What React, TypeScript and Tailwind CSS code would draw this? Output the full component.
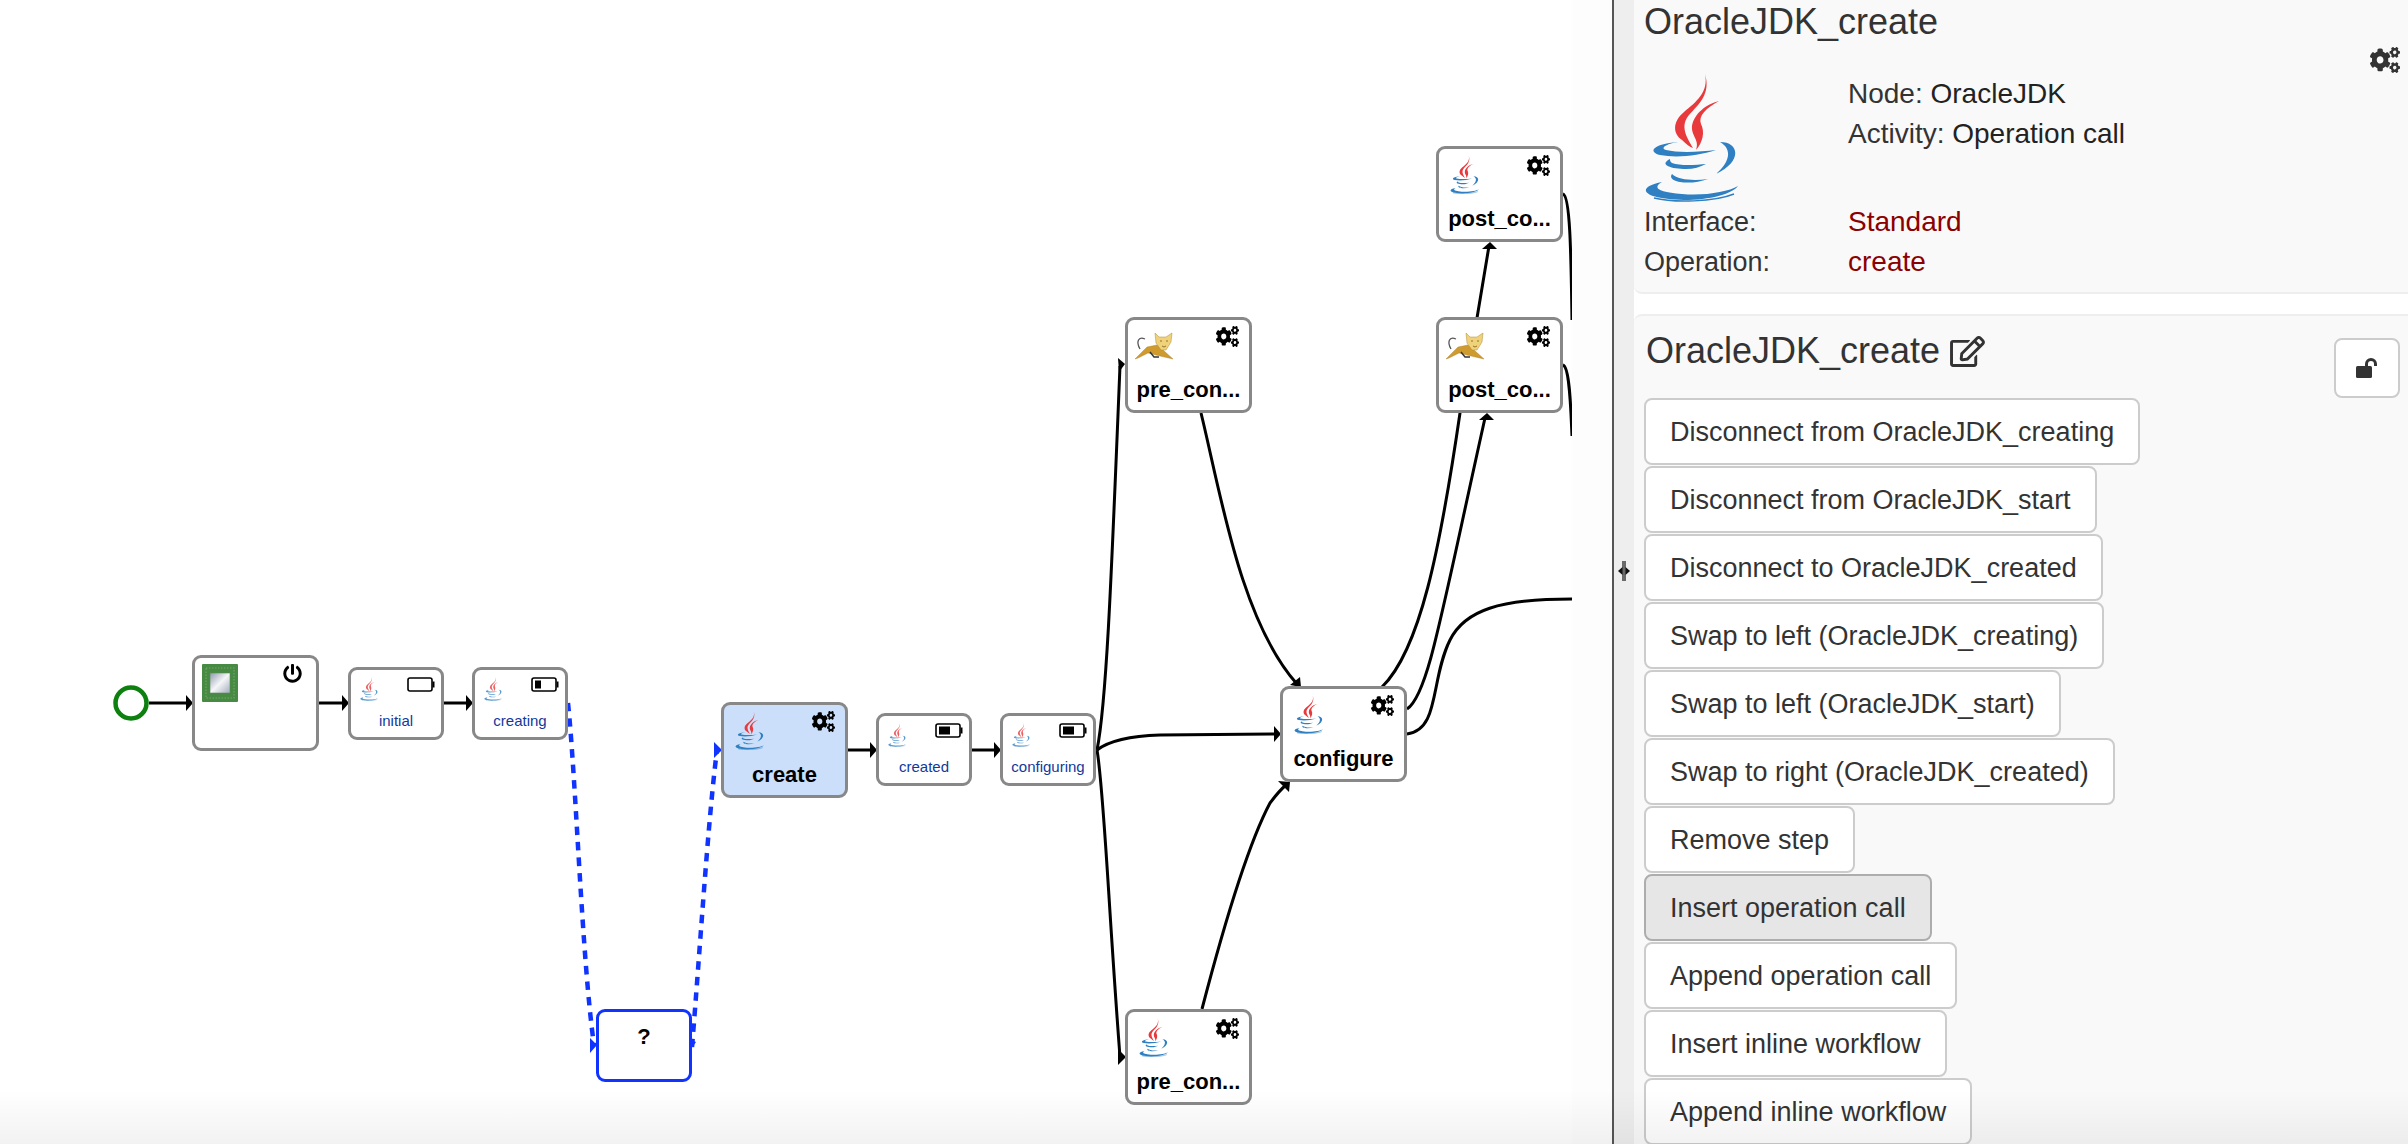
import React from "react";
import { FaCogs, FaPowerOff, FaRegEdit } from "react-icons/fa";

function JavaLogo({ className }: { className: string }) {
  return (
    <svg viewBox="0 0 94 128" className={className} fill="none" preserveAspectRatio="none">
      <path d="M61 0C65 18 52 28 40 38C28 48 29 60 38 66C42 70 46 73 49 74C42 62 36 52 45 41C55 30 67 20 61 0Z" fill="#e8393c" />
      <path d="M75 27C62 30 50 40 48 52C47 62 56 66 52 76C59 68 61 58 57 50C54 42 62 34 75 27Z" fill="#e8393c" />
      <g fill="#2f80c2">
        <path d="M34 68C8 70 4 78 16 81C32 84 54 82 72 76C56 78 34 79 22 76C16 74 22 70 34 68Z" />
        <path d="M76 68C96 68 98 88 72 100C84 90 90 76 76 68Z" />
        <path d="M26 85C14 91 28 95 42 95C50 95 56 93 62 90C52 91 36 92 28 89C26 88 26 86 26 85Z" />
        <path d="M28 100C22 108 46 112 64 105C50 107 34 106 28 100Z" />
        <path d="M18 108C-8 113 -4 125 40 126C66 126 88 120 94 112C84 118 60 122 38 120C14 118 8 114 18 108Z" />
      </g>
      <path d="M10 124C30 129 70 128 90 120" stroke="#2f80c2" strokeWidth="1.5" />
    </svg>
  );
}

function Tomcat() {
  return (
    <svg viewBox="0 0 39 28" className="w-[39px] h-[28px]" fill="none">
      <path d="M10 7C3 4 1 10 5 17" stroke="#555" strokeWidth="1.3" />
      <path d="M0 27L12 15L22 13L28 18L38 27L25 24L13 21L3 26Z" fill="#cf9a2e" stroke="#a87a1e" strokeWidth=".4" />
      <path d="M15 20L19 25L24 25" stroke="#333" strokeWidth="1.4" />
      <path d="M20 1L24 5H31L37 1L36 10L31 18L26 18L21 11Z" fill="#efd27a" stroke="#b08a35" strokeWidth=".5" />
      <path d="M25 9H27M31 9H33M27 14L29 15L31 14" stroke="#8a6a20" strokeWidth=".9" />
    </svg>
  );
}

function Chip() {
  return (
    <svg viewBox="0 0 36 38" className="w-[36px] h-[38px]">
      <defs>
        <linearGradient id="chipface" x1="0" y1="0" x2="1" y2="1">
          <stop offset="0" stopColor="#8f99ad" />
          <stop offset=".5" stopColor="#f5f6f8" />
          <stop offset="1" stopColor="#a3acbc" />
        </linearGradient>
      </defs>
      <rect width="36" height="38" rx="1" fill="#468a44" />
      <rect x="4" y="4" width="28" height="30" fill="none" stroke="#6ea662" strokeWidth="1.2" strokeDasharray="1.5 1.5" />
      <rect x="8" y="9" width="20" height="20" fill="url(#chipface)" stroke="#5c8a58" strokeWidth=".6" />
    </svg>
  );
}

function Battery({ level }: { level: number }) {
  return (
    <svg viewBox="0 0 28 15" className="w-[28px] h-[15px]">
      <rect x="1" y="1" width="24" height="13" rx="2" fill="#fff" stroke="#000" strokeWidth="1.6" />
      <rect x="25.5" y="4.5" width="2" height="6" fill="#000" />
      {level > 0 && <rect x="4" y="3.5" width={level} height="8" fill="#000" />}
    </svg>
  );
}

function Gears({ className }: { className: string }) {
  return <FaCogs className={className} preserveAspectRatio="none" />;
}

type NodeProps = {
  x: number;
  y: number;
  label: string;
  icon: "java" | "tomcat";
  selected?: boolean;
};

function BigNode({ x, y, label, icon, selected }: NodeProps) {
  return (
    <div
      className={`absolute w-[127px] h-[96px] rounded-[9px] border-[3px] border-[#888] flex flex-col ${selected ? "bg-[#cbdffb]" : "bg-white"}`}
      style={{ left: x, top: y }}
    >
      <div className="flex justify-between items-start h-[54px] pl-[11px] pr-[10px] pt-[7px]">
        {icon === "java" ? <JavaLogo className="w-[29px] h-[38px]" /> : <div className="-ml-[4px] mt-[5px]"><Tomcat /></div>}
        <Gears className="w-[23px] h-[21px] -mt-px text-black" />
      </div>
      <div className="text-center text-[22px] leading-[32px] font-bold text-black">{label}</div>
    </div>
  );
}

function SmallNode({ x, label, y, level }: { x: number; y: number; label: string; level: number }) {
  return (
    <div
      className="absolute w-[96px] h-[73px] rounded-[9px] border-[3px] border-[#888] bg-white flex flex-col"
      style={{ left: x, top: y }}
    >
      <div className="flex justify-between items-start h-[39px] pl-[9px] pr-[6px] pt-[7px]">
        <JavaLogo className="w-[18px] h-[24px] opacity-80" />
        <Battery level={level} />
      </div>
      <div className="text-center text-[15px] leading-[24px] text-[#12399c]">{label}</div>
    </div>
  );
}

const ACTIONS: { label: string; active?: boolean }[] = [
  { label: "Disconnect from OracleJDK_creating" },
  { label: "Disconnect from OracleJDK_start" },
  { label: "Disconnect to OracleJDK_created" },
  { label: "Swap to left (OracleJDK_creating)" },
  { label: "Swap to left (OracleJDK_start)" },
  { label: "Swap to right (OracleJDK_created)" },
  { label: "Remove step" },
  { label: "Insert operation call", active: true },
  { label: "Append operation call" },
  { label: "Insert inline workflow" },
  { label: "Append inline workflow" },
];

function Diagram() {
  return (
    <div className="relative w-[1572px] h-full shrink-0 overflow-hidden bg-white">
      <svg className="absolute left-0 top-0 w-[1572px] h-[1144px]" viewBox="0 0 1572 1144" fill="none">
        <g stroke="#000" strokeWidth="3">
          <path d="M149 703H188M318 703H344M443 703H468M847 750H872M971 750H996" />
          <path d="M1097 750C1107 700 1112 560 1120 366" />
          <path d="M1097 750C1104 790 1108 900 1120 1057" />
          <path d="M1097 750C1110 740 1130 736 1160 735L1276 734" />
          <path d="M1201 413C1220 490 1240 620 1297 684" />
          <path d="M1202 1009C1220 940 1245 850 1270 803C1276 795 1280 790 1286 785" />
          <path d="M1382 687C1420 650 1440 550 1460 413L1477 318L1489 246" />
          <path d="M1407 709C1428 695 1440 620 1485 418" />
          <path d="M1407 734C1440 730 1430 680 1450 640C1465 610 1500 599 1572 599" />
          <path d="M1563 194C1570 196 1571 250 1572 320" />
          <path d="M1563 365C1570 367 1571 415 1572 436" />
        </g>
        <g fill="#000">
          <polygon points="186,695 193,703 186,711" />
          <polygon points="342,695 349,703 342,711" />
          <polygon points="466,695 473,703 466,711" />
          <polygon points="870,742 877,750 870,758" />
          <polygon points="994,742 1001,750 994,758" />
          <polygon points="1274,726 1281,734 1274,742" />
          <polygon points="1118,1049 1126,1057 1118,1065" />
          <polygon points="1118,358 1125,364 1119,372" />
          <polygon points="1490,242 1497,249 1482,249" />
          <polygon points="1487,413 1494,420 1479,420" />
          <polygon points="1300,677 1301,687 1290,685" />
          <polygon points="1290,782 1289,792 1278,781" />
        </g>
        <g stroke="#1133ff" strokeWidth="4.5" strokeDasharray="8.5 7">
          <path d="M568 703C576 780 582 960 594 1045" />
          <path d="M692 1047C700 950 708 820 717 750" />
        </g>
        <g fill="#1133ff">
          <polygon points="590,1038 597,1045 590,1053" />
          <polygon points="714,742 722,750 714,758" />
          <polygon points="691,1040 696,1042 691,1049" />
        </g>
        <circle cx="131" cy="703" r="15.5" stroke="#0d8010" strokeWidth="4.5" fill="#fff" />
      </svg>

      <div className="absolute left-[192px] top-[655px] w-[127px] h-[96px] rounded-[9px] border-[3px] border-[#888] bg-white flex justify-between items-start pl-[7px] pr-[14px] pt-[6px]">
        <Chip />
        <FaPowerOff className="w-[19px] h-[19px] text-black" />
      </div>
      <SmallNode x={348} y={667} label="initial" level={0} />
      <SmallNode x={472} y={667} label="creating" level={6} />
      <BigNode x={721} y={702} label="create" icon="java" selected />
      <SmallNode x={876} y={713} label="created" level={11} />
      <SmallNode x={1000} y={713} label="configuring" level={11} />
      <BigNode x={1125} y={317} label="pre_con..." icon="tomcat" />
      <BigNode x={1125} y={1009} label="pre_con..." icon="java" />
      <BigNode x={1280} y={686} label="configure" icon="java" />
      <BigNode x={1436} y={146} label="post_co..." icon="java" />
      <BigNode x={1436} y={317} label="post_co..." icon="tomcat" />

      <div className="absolute left-[596px] top-[1009px] w-[96px] h-[73px] rounded-[9px] border-[3px] border-[#1133ff] bg-white text-center text-[22px] leading-[50px] font-bold text-black">
        ?
      </div>
    </div>
  );
}

function InfoPanel() {
  return (
    <section className="bg-[#f9f9f9] border-b-2 border-[#eeeeee] rounded-bl-[8px] pl-[10px] h-[294px] shrink-0">
      <h3 className="text-[36px] leading-[44px] text-[#333]">OracleJDK_create</h3>
      <div className="flex justify-end h-[27px] mt-[3px] pr-[8px]">
        <Gears className="w-[30px] h-[26px] text-[#333]" />
      </div>
      <div className="flex h-[128px]">
        <div className="w-[204px] shrink-0">
          <JavaLogo className="w-[94px] h-[128px]" />
        </div>
        <div className="text-[28px] leading-[40px] text-[#333]">
          <div>Node: <span className="text-[#222]">OracleJDK</span></div>
          <div>Activity: <span className="text-[#222]">Operation call</span></div>
        </div>
      </div>
      <div className="grid grid-cols-[204px_1fr] leading-[40px] text-[#333]">
        <div className="text-[27px]">Interface:</div>
        <div className="text-[28px] text-[#8b0000]">Standard</div>
        <div className="text-[27px]">Operation:</div>
        <div className="text-[28px] text-[#8b0000]">create</div>
      </div>
    </section>
  );
}

function StepPanel() {
  return (
    <section className="flex-1 min-h-0 mt-[20px] bg-[#f9f9f9] border-t-2 border-[#eeeeee] rounded-tl-[8px] pl-[10px] pt-[13px]">
      <div className="flex justify-between items-start h-[69px] pr-[8px]">
        <div className="flex items-center gap-[10px] pl-[2px]">
          <h3 className="text-[36px] leading-[44px] text-[#333]">OracleJDK_create</h3>
          <FaRegEdit className="w-[35px] h-[31px] text-[#333]" />
        </div>
        <button className="w-[66px] h-[60px] mt-[9px] rounded-[8px] border-2 border-[#ccc] bg-white flex items-center justify-center">
          <svg viewBox="0 0 22 20" className="w-[22px] h-[20px]" fill="none">
            <rect x="0" y="8" width="16" height="12" rx="1.5" fill="#333" />
            <path d="M10.5 8V6A4.5 4.5 0 0 1 19.5 6V8" stroke="#333" strokeWidth="3" />
          </svg>
        </button>
      </div>
      <div className="flex flex-col items-start gap-px">
        {ACTIONS.map((a) => (
          <button
            key={a.label}
            className={`h-[67px] shrink-0 px-[24px] pt-[2px] rounded-[8px] border-2 text-[27px] text-[#333] whitespace-nowrap ${a.active ? "bg-[#e6e6e6] border-[#adadad]" : "bg-white border-[#ccc]"}`}
          >
            {a.label}
          </button>
        ))}
      </div>
    </section>
  );
}

export default function App() {
  return (
    <div className="relative flex w-[2408px] h-[1144px] overflow-hidden bg-white [font-family:'Liberation_Sans',Arial,sans-serif]">
      <Diagram />
      <div className="w-[40px] shrink-0 bg-[#fdfdfd]" />
      <div className="w-[2px] shrink-0 bg-[#555]" />
      <div className="w-[20px] shrink-0 bg-[#eeeeee] flex items-center justify-center pb-[2px]">
        <svg viewBox="0 0 12 20" className="w-[12px] h-[20px]">
          <path d="M5 0V20M7 0V20" stroke="#111" strokeWidth="1.2" />
          <path d="M4.5 6L0 10L4.5 14ZM7.5 6L12 10L7.5 14Z" fill="#111" />
        </svg>
      </div>
      <div className="flex-1 min-w-0 flex flex-col">
        <InfoPanel />
        <StepPanel />
      </div>
      <div className="absolute left-0 right-0 bottom-0 h-[54px] pointer-events-none bg-linear-to-b from-transparent to-[#0000000d]" />
    </div>
  );
}
